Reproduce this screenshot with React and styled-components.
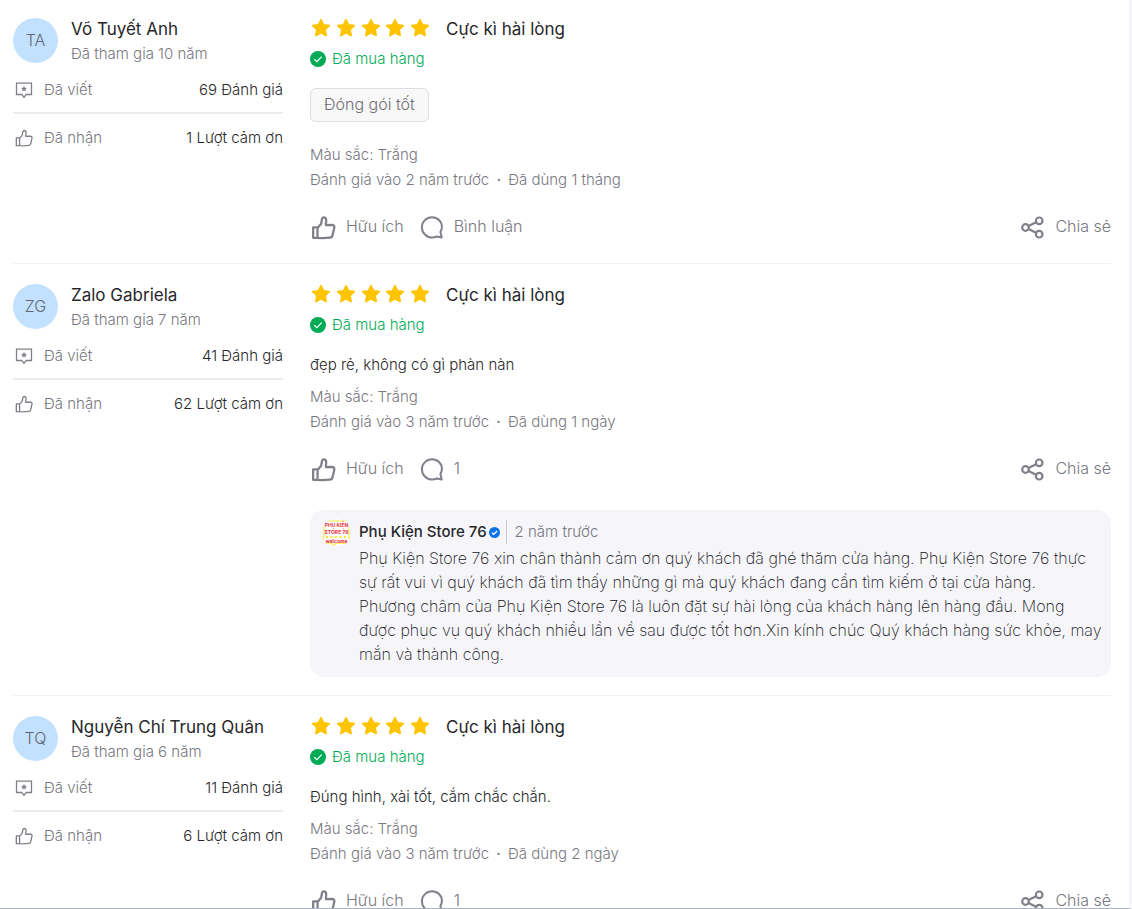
import React from "react";
import styled, { createGlobalStyle } from "styled-components";

const GlobalStyle = createGlobalStyle`
  *, *::before, *::after { box-sizing: border-box; }
  body {
    margin: 0;
    background: #fff;
    color: #27272a;
    font-family: Inter, "Liberation Sans", sans-serif;
    font-size: 15px;
    font-weight: 300;
    line-height: 24px;
  }
  button { font: inherit; color: inherit; background: none; border: 0; padding: 0; cursor: pointer; }
  p, h3, h4, dl, dt, dd { margin: 0; font-weight: inherit; }
`;

const Page = styled.main`
  height: 100vh;
  overflow: hidden;
  border-right: 3px solid #f5f5fa;
  border-bottom: 1px solid #a9b1c2;
  padding: 0 18px 0 13px;
`;

const Review = styled.article`
  display: grid;
  grid-template-columns: 270px minmax(0, 1fr);
  column-gap: 27px;
  padding: 18px 0;

  & + & {
    border-top: 1px solid #f2f2f2;
    padding-top: 20px;
  }
`;

const Profile = styled.header`
  display: flex;
  gap: 13px;
`;

const Avatar = styled.div`
  display: grid;
  place-items: center;
  width: 45px;
  height: 45px;
  padding-bottom: 2px;
  border-radius: 50%;
  background: #c2e1ff;
  color: #5d6672;
  font-size: 16px;
`;

const Name = styled.h3`
  font-size: 17px;
  font-weight: 400;
  line-height: 22px;
`;

const Joined = styled.p`
  color: #787881;
  line-height: 28px;
`;

const Meta = styled.p`
  color: #787881;
  line-height: 25px;
`;

const Stats = styled.dl`
  padding-top: 9px;
`;

const Stat = styled.div`
  display: flex;
  align-items: center;
  height: 50px;

  & + & { border-top: 2px solid #ebebf0; }
  &:first-child { height: 35px; padding-bottom: 9px; }
`;

const StatLabel = styled.dt`
  display: flex;
  align-items: center;
  gap: 10px;
  flex: 1;
  padding-left: 1px;
  color: #787881;
`;

const Rating = styled.div`
  display: flex;
  align-items: center;
  gap: 15px;
  height: 22px;
`;

const Stars = styled.div`
  display: flex;
  width: 121px;
  justify-content: space-between;
`;

const Verified = styled.p`
  display: flex;
  align-items: center;
  gap: 6px;
  margin-top: 7px;
  color: #00ab56;
`;

const Chip = styled.span`
  display: inline-block;
  margin: 17px 0 20px;
  padding: 3px 13px 5px;
  border: 1px solid #dddde3;
  border-radius: 6px;
  background: #f8f8f8;
  color: #6f6f76;
  font-size: 16px;
  vertical-align: top;
`;

const Comment = styled.p`
  margin: 16px 0 7px;
`;

const Dot = styled.span`
  margin: 0 3px;
  font-weight: 500;
`;

const Actions = styled.div`
  display: flex;
  align-items: center;
  gap: 14px;
  margin-top: 18px;
  padding-bottom: 4px;
`;

const Action = styled.button`
  display: flex;
  align-items: center;
  gap: 9px;
  color: #787881;
  font-size: 16px;

  &:last-child { margin-left: auto; }
  svg { margin-top: 4px; }
`;

const Reply = styled.section`
  display: flex;
  gap: 9px;
  margin-top: 23px;
  padding: 9px 8px 11px 13px;
  border-radius: 14px;
  background: #f5f5fa;
`;

const ReplyHead = styled.div`
  display: flex;
  align-items: center;
  height: 26px;
  color: #787881;
`;

const Store = styled.h4`
  color: #27272a;
  font-weight: 500;
  margin-right: 2px;
`;

const Time = styled.time`
  margin-left: 6px;
  padding-left: 8px;
  border-left: 1px solid #c8c8ce;
`;

const ReplyText = styled.p`
  margin-top: 1px;
  font-size: 16px;
  font-weight: 200;
  color: #111114;
  white-space: pre-line;
`;

const THUMB =
  "M2.800 11.800h3.900v9.400H2.800zM6.700 12.500l3.200-3.900.8-4.400c.2-.8.8-1.200 1.500-1.200 1.400 0 2.200 1.100 2.200 2.600l-.3 4.300 5.500-.2c1.400 0 2.300 1.200 2 2.500l-1.600 6.700c-.2 1.200-1.200 2-2.400 2l-6.600.6-4.300-.3";

function Thumb({ size, stroke }) {
  return (
    <svg width={size} height={size} viewBox="0 0 24 24" fill="none" stroke="#808089" strokeWidth={stroke} strokeLinejoin="round" aria-hidden="true">
      <path d={THUMB} />
    </svg>
  );
}

function Written() {
  return (
    <svg width="20" height="20" viewBox="0 0 20 20" fill="none" stroke="#808089" strokeWidth="1.300" aria-hidden="true">
      <path d="M2.500 3.200h15v11.300h-5.200L10 17.200l-2.300-2.700H2.500z" />
      <path d="M10 5.800l.9 2 2.100.2-1.600 1.400.5 2.100-1.900-1.100-1.900 1.100.5-2.100L7 8l2.100-.2z" fill="#808089" stroke="none" />
    </svg>
  );
}

function Bubble() {
  return (
    <svg width="27" height="27" viewBox="0 0 27 27" fill="none" stroke="#808089" strokeWidth="2" strokeLinejoin="round" aria-hidden="true">
      <path d="M14 3.200c5.600 0 9.900 4.300 9.900 9.700 0 2.100-.6 3.700-1.500 5.200l1.300 5.500-4.900-1.100a11 11 0 0 1-4.800 1C8.500 23.500 3.900 18.800 3.900 13.200S8.500 3.200 14 3.200z" />
    </svg>
  );
}

function Share() {
  return (
    <svg width="27" height="27" viewBox="0 0 27 27" fill="none" stroke="#808089" strokeWidth="2.200" aria-hidden="true">
      <circle cx="6.500" cy="13.500" r="3.300" />
      <circle cx="20.200" cy="6.800" r="3.300" />
      <circle cx="20.200" cy="20.200" r="3.300" />
      <path d="M9.500 12l7.600-3.800M9.500 15l7.600 3.800" />
    </svg>
  );
}

function Star() {
  return (
    <svg width="22" height="22" viewBox="0 1 22 22" fill="#ffc400" stroke="#ffc400" strokeWidth="1.800" strokeLinejoin="round" aria-hidden="true">
      <path d="M11 2.800l2.500 5.100 5.700.8-4.200 4 1.100 5.800-5.100-2.800-5.100 2.800 1.100-5.800-4.200-4 5.700-.8z" />
    </svg>
  );
}

function Check({ size, fill }) {
  return (
    <svg width={size} height={size} viewBox="0 0 16 16" fill="none" aria-hidden="true">
      <circle cx="8" cy="8" r="8" fill={fill} />
      <path d="M4.300 8.300l2.600 2.400 4.800-5" stroke="#fff" strokeWidth={size < 14 ? 2 : 1.200} />
    </svg>
  );
}

function StoreLogo() {
  return (
    <svg width="27" height="27" viewBox="0 0 27 27" fontFamily="Inter, sans-serif" fontWeight="700" fontSize="5" textAnchor="middle" aria-label="Phụ Kiện Store 76">
      <circle cx="13.500" cy="13.500" r="13.500" fill="#fff" />
      <path d="M5 2h17M1 8v12M26 8v12M3 24.200h6l1 2 4-2h9" stroke="#fff04a" strokeWidth="1.200" fill="none" />
      <text x="13.500" y="8" fill="#e8303c">PHỤ KIỆN</text>
      <text x="13.500" y="14.500" fill="#e8303c">STORE 76</text>
      <path d="M3 18h21" stroke="#ffe62e" strokeWidth="2" strokeDasharray="2 2.500" />
      <text x="13.500" y="23.500" fill="#e8303c">welcome</text>
    </svg>
  );
}

const REVIEWS = [
  { initials: "TA", name: "Võ Tuyết Anh", years: 10, written: 69, thanks: 1, tag: "Đóng gói tốt", ago: 2, used: "1 tháng", comments: "Bình luận" },
  {
    initials: "ZG", name: "Zalo Gabriela", years: 7, written: 41, thanks: 62, text: "đẹp rẻ, không có gì phàn nàn", ago: 3, used: "1 ngày", comments: "1",
    reply: "Phụ Kiện Store 76 xin chân thành cảm ơn quý khách đã ghé thăm cửa hàng. Phụ Kiện Store 76 thực sự rất vui vì quý khách đã tìm thấy những gì mà quý khách đang cần tìm kiếm ở tại cửa hàng.\nPhương châm của Phụ Kiện Store 76 là luôn đặt sự hài lòng của khách hàng lên hàng đầu. Mong được phục vụ quý khách nhiều lần về sau được tốt hơn.Xin kính chúc Quý khách hàng sức khỏe, may mắn và thành công.",
  },
  { initials: "TQ", name: "Nguyễn Chí Trung Quân", years: 6, written: 11, thanks: 6, text: "Đúng hình, xài tốt, cắm chắc chắn.", ago: 3, used: "2 ngày", comments: "1" },
];

function ReviewItem({ r }) {
  return (
    <Review>
      <div>
        <Profile>
          <Avatar>{r.initials}</Avatar>
          <div>
            <Name>{r.name}</Name>
            <Joined>Đã tham gia {r.years} năm</Joined>
          </div>
        </Profile>
        <Stats>
          <Stat>
            <StatLabel><Written />Đã viết</StatLabel>
            <dd>{r.written} Đánh giá</dd>
          </Stat>
          <Stat>
            <StatLabel><Thumb size={20} stroke={1.6} />Đã nhận</StatLabel>
            <dd>{r.thanks} Lượt cảm ơn</dd>
          </Stat>
        </Stats>
      </div>
      <div>
        <Rating>
          <Stars>{[1, 2, 3, 4, 5].map((n) => <Star key={n} />)}</Stars>
          <Name as="h4">Cực kì hài lòng</Name>
        </Rating>
        <Verified><Check size={16} fill="#00ab56" />Đã mua hàng</Verified>
        {r.tag && <Chip>{r.tag}</Chip>}
        {r.text && <Comment>{r.text}</Comment>}
        <Meta>Màu sắc: Trắng</Meta>
        <Meta>Đánh giá vào {r.ago} năm trước <Dot>·</Dot> Đã dùng {r.used}</Meta>
        <Actions>
          <Action type="button"><Thumb size={27} stroke={2} />Hữu ích</Action>
          <Action type="button"><Bubble />{r.comments}</Action>
          <Action type="button"><Share />Chia sẻ</Action>
        </Actions>
        {r.reply && (
          <Reply>
            <div><StoreLogo /></div>
            <div>
              <ReplyHead>
                <Store>Phụ Kiện Store 76</Store>
                <Check size={11} fill="#0b74e5" />
                <Time>2 năm trước</Time>
              </ReplyHead>
              <ReplyText>{r.reply}</ReplyText>
            </div>
          </Reply>
        )}
      </div>
    </Review>
  );
}

export default function App() {
  return (
    <>
      <GlobalStyle />
      <Page>
        {REVIEWS.map((r) => <ReviewItem key={r.initials} r={r} />)}
      </Page>
    </>
  );
}
